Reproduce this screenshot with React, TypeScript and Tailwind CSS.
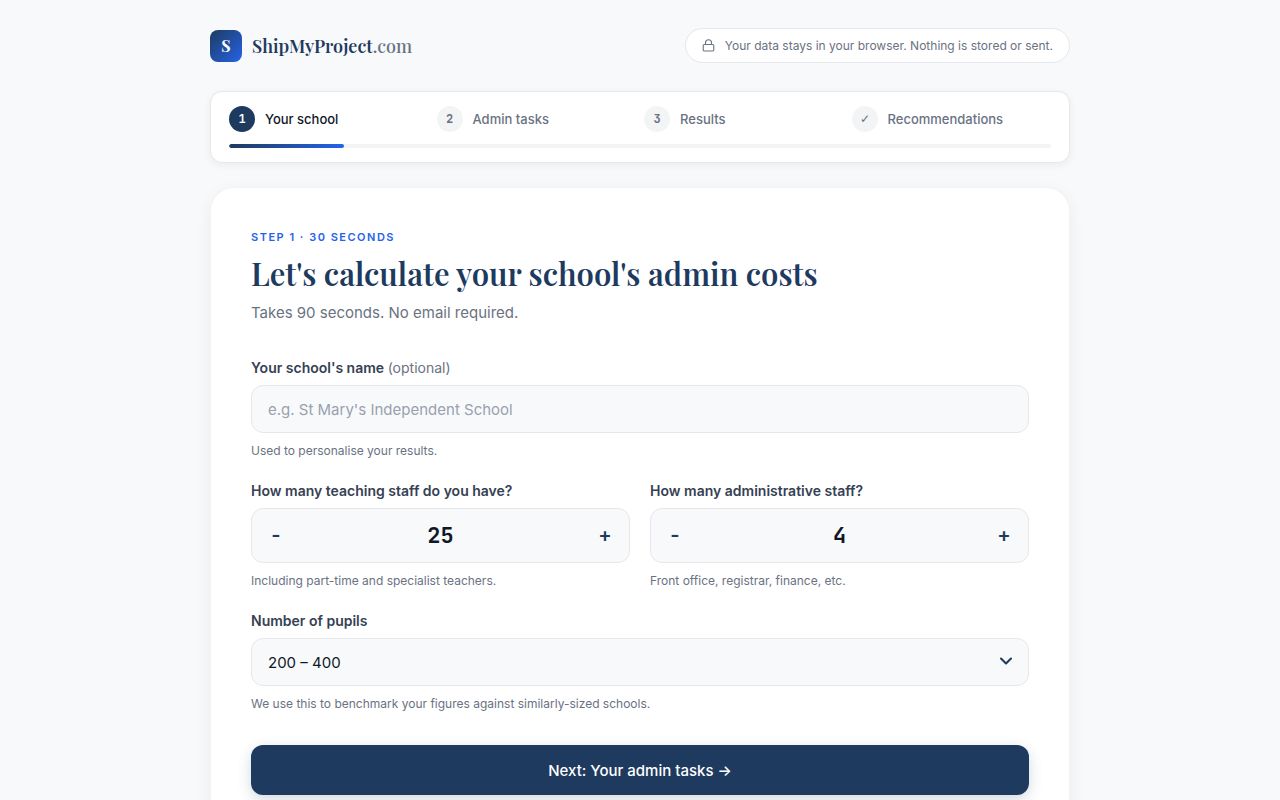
import React, { useState } from 'react';
import { ChevronDown } from 'lucide-react';

const STEPS = [
  { marker: '1', label: 'Your school' },
  { marker: '2', label: 'Admin tasks' },
  { marker: '3', label: 'Results' },
  { marker: '✓', label: 'Recommendations' },
];

const PUPIL_RANGES = ['Under 200', '200 – 400', '400 – 800', '800+'];

interface StepperProps {
  id: string;
  label: string;
  hint: string;
  value: number;
  onChange: (value: number) => void;
}

const LockIcon: React.FC = () => (
  <svg width="13" height="13" viewBox="0 0 13 13" fill="none" stroke="currentColor" strokeWidth="1.1" strokeLinecap="round" strokeLinejoin="round" aria-hidden="true">
    <rect x="1.2" y="5.5" width="10.6" height="6.5" rx="1.2" />
    <path d="M3.5 5.5V3.8a3 3 0 0 1 6 0v1.7" />
  </svg>
);

const Stepper: React.FC<StepperProps> = ({ id, label, hint, value, onChange }) => (
  <div>
    <label htmlFor={id} className="block text-sm leading-5 font-semibold text-gray-700">{label}</label>
    <div className="mt-[7px] h-[55px] flex items-center rounded-xl border border-gray-200 bg-[#f8f9fb]">
      <button
        type="button"
        aria-label="Decrease"
        onClick={() => onChange(Math.max(0, value - 1))}
        className="w-12 h-full pb-0.5 text-xl font-semibold text-[#1e3a5f]"
      >
        -
      </button>
      <input
        id={id}
        type="text"
        inputMode="numeric"
        value={value}
        onChange={(e) => onChange(Number(e.target.value) || 0)}
        className="flex-1 min-w-0 bg-transparent text-center font-['JetBrains_Mono','Roboto',sans-serif] text-[22px] font-semibold text-gray-900 outline-none"
      />
      <button
        type="button"
        aria-label="Increase"
        onClick={() => onChange(value + 1)}
        className="w-12 h-full pb-0.5 text-xl font-semibold text-[#1e3a5f]"
      >
        +
      </button>
    </div>
    <p className="mt-2 text-xs leading-5 text-gray-500">{hint}</p>
  </div>
);

const App: React.FC = () => {
  const [school, setSchool] = useState('');
  const [teachers, setTeachers] = useState(25);
  const [admins, setAdmins] = useState(4);
  const [pupils, setPupils] = useState('200 – 400');
  const progress = 14;

  return (
    <div className="min-h-screen bg-[#f8f9fb] font-['Inter',sans-serif] text-gray-900">
      <div className="max-w-[900px] mx-auto px-5 pt-7 pb-12">
        {/* Header */}
        <header className="flex items-center justify-between gap-4">
          <a href="#" className="flex items-center gap-2.5">
            <span className="w-8 h-8 rounded-lg bg-linear-135 from-[#1e3a5f] to-[#2563eb] flex items-center justify-center font-['Playfair_Display','Liberation_Serif',serif] text-base font-bold text-white">
              S
            </span>
            <span className="font-['Playfair_Display','Liberation_Serif',serif] text-lg leading-7 font-semibold text-[#1e3a5f]">
              ShipMyProject<span className="font-medium text-gray-500">.com</span>
            </span>
          </a>
          <div className="h-[35px] px-4 flex items-center gap-2.5 rounded-full border border-gray-200 bg-white text-xs text-gray-500">
            <LockIcon />
            <span>Your data stays in your browser. Nothing is stored or sent.</span>
          </div>
        </header>

        {/* Progress */}
        <nav className="mt-7 px-[18px] py-3.5 rounded-xl border border-gray-200 bg-white shadow-[0_2px_8px_rgba(15,23,42,0.06)]">
          <ol className="grid grid-cols-4 gap-2">
            {STEPS.map((step, i) => (
              <li key={step.label} className={`flex items-center gap-2.5 text-[13px] leading-[22px] font-medium ${i === 0 ? 'text-gray-900' : 'text-gray-500'}`}>
                <span
                  className={`w-[26px] h-[26px] rounded-full flex items-center justify-center font-['JetBrains_Mono','Roboto',sans-serif] text-xs ${
                    i === 0 ? 'bg-[#1e3a5f] text-white' : 'bg-gray-100 text-gray-500'
                  } ${step.marker === '✓' ? 'font-normal' : 'font-semibold'}`}
                >
                  {step.marker}
                </span>
                {step.label}
              </li>
            ))}
          </ol>
          <div className="mt-3 h-1 rounded-full bg-gray-100 overflow-hidden">
            <div className="h-full rounded-full bg-linear-to-r from-[#1e3a5f] to-[#2563eb]" style={{ width: `${progress}%` }} />
          </div>
        </nav>

        {/* Step form */}
        <main className="mt-6 p-10 rounded-3xl border border-gray-100 bg-white shadow-[0_4px_16px_rgba(15,23,42,0.06)]">
          <p className="text-[11px] leading-[18px] font-semibold tracking-[1.5px] uppercase text-[#2563eb]">Step 1 · 30 seconds</p>
          <h1 className="mt-[7px] font-['Playfair_Display','Liberation_Serif',serif] text-[31px] leading-10 font-semibold text-[#1e3a5f]">
            Let's calculate your school's admin costs
          </h1>
          <p className="mt-2 text-[15px] leading-6 text-gray-500">Takes 90 seconds. No email required.</p>

          <form className="mt-[33px] flex flex-col gap-5" onSubmit={(e) => e.preventDefault()}>
            <div>
              <label htmlFor="school" className="block text-sm leading-5 font-semibold text-gray-700">
                Your school's name <span className="font-normal text-gray-500">(optional)</span>
              </label>
              <input
                id="school"
                type="text"
                value={school}
                onChange={(e) => setSchool(e.target.value)}
                placeholder="e.g. St Mary's Independent School"
                className="mt-[7px] block w-full h-12 px-4 rounded-xl border border-gray-200 bg-[#f8f9fb] text-[15px] placeholder:text-gray-400 outline-none focus:border-[#2563eb]"
              />
              <p className="mt-2 text-xs leading-5 text-gray-500">Used to personalise your results.</p>
            </div>

            <div className="grid sm:grid-cols-2 gap-5">
              <Stepper
                id="teachers"
                label="How many teaching staff do you have?"
                hint="Including part-time and specialist teachers."
                value={teachers}
                onChange={setTeachers}
              />
              <Stepper
                id="admins"
                label="How many administrative staff?"
                hint="Front office, registrar, finance, etc."
                value={admins}
                onChange={setAdmins}
              />
            </div>

            <div>
              <label htmlFor="pupils" className="block text-sm leading-5 font-semibold text-gray-700">Number of pupils</label>
              <div className="relative mt-[7px]">
                <select
                  id="pupils"
                  value={pupils}
                  onChange={(e) => setPupils(e.target.value)}
                  className="block w-full h-12 px-4 pt-0.5 appearance-none rounded-xl border border-gray-200 bg-[#f8f9fb] text-[15px] text-gray-900 outline-none focus:border-[#2563eb]"
                >
                  {PUPIL_RANGES.map((range) => (
                    <option key={range}>{range}</option>
                  ))}
                </select>
                <ChevronDown size={20} strokeWidth={2.5} className="absolute right-[13px] top-[13px] text-[#1e3a5f] pointer-events-none" />
              </div>
              <p className="mt-2 text-xs leading-5 text-gray-500">We use this to benchmark your figures against similarly-sized schools.</p>
            </div>

            <button
              type="submit"
              className="mt-[11px] h-[50px] w-full pt-0.5 rounded-xl bg-[#1e3a5f] text-[15px] font-medium text-white shadow-[0_4px_14px_rgba(30,58,95,0.2)]"
            >
              Next: Your admin tasks →
            </button>
          </form>
        </main>
      </div>
    </div>
  );
};

export default App;
